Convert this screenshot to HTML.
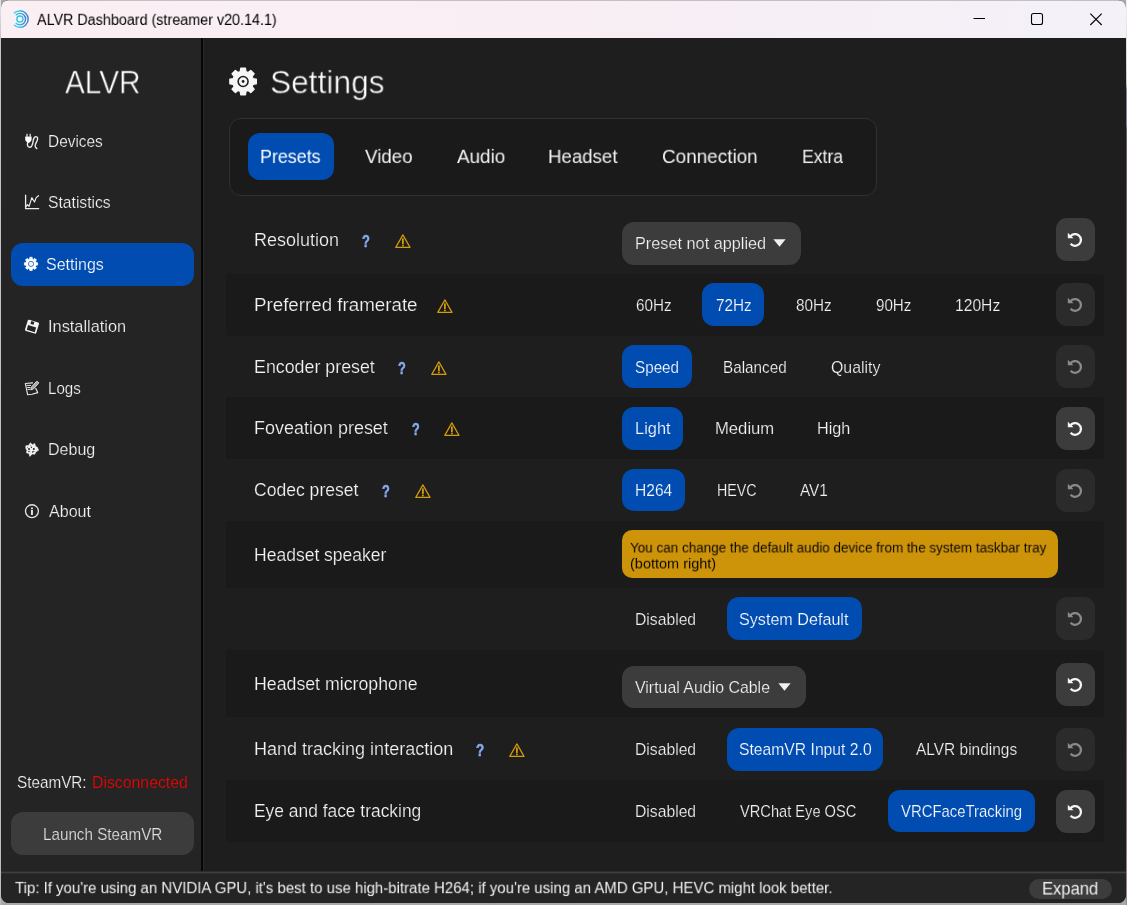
<!DOCTYPE html>
<html><head><meta charset="utf-8"><title>ALVR Dashboard</title>
<style>
html,body{margin:0;padding:0;}
body{width:1127px;height:905px;overflow:hidden;position:relative;background:#a9a7a9;font-family:"Liberation Sans",sans-serif;}
.a{position:absolute;}
.t{position:absolute;white-space:pre;font-family:"Liberation Sans",sans-serif;transform-origin:0 0;}
#txt{left:0;top:0;width:1127px;height:905px;will-change:transform;}
#win{left:1px;top:0;width:1125px;height:903px;border-radius:8px;background:#1e1e1e;overflow:hidden;}
#title{left:0;top:0;width:1125px;height:38px;background:linear-gradient(90deg,#faeff3 0%,#f8eef4 50%,#f6eff6 75%,#f4f1f8 100%);border-top:1px solid #c2c0c2;box-sizing:border-box;}
#side{left:0;top:38px;width:200px;height:834px;background:#242424;}
#sep{left:200px;top:38px;width:2px;height:834px;background:#060606;}
#sep2{left:202px;top:38px;width:1px;height:834px;background:#272727;}
#bot{left:0;top:871px;width:1125px;height:32px;background:#242424;}
#botline{left:0;top:871px;width:1125px;height:3px;background:linear-gradient(180deg,#2c2c2c 0,#2c2c2c 1px,#404040 1px,#404040 2px,#2d2d2d 2px,#2d2d2d 3px);}
#ol{left:0;top:0;width:1px;height:905px;background:linear-gradient(180deg,#e4e4e4 0,#c4c4c4 40px,#bcbcbc 100%);}
#or{left:1126px;top:0;width:1px;height:905px;background:linear-gradient(180deg,#f0eeee 0,#dcd8d2 60px,#c8c4bc 84px,#7e86a2 90px,#7e86a2 124px,#6c5c62 130px,#7a666a 700px,#9c8488 100%);}
.sel{background:#004cb0;}
.btn{background:#3c3c3c;}
.dis{background:#2b2b2b;}
.stripe{left:225px;width:878px;background:#1a1a1a;border-radius:3px;}
.rb{left:1055px;width:39px;height:43px;border-radius:11px;}
.ob{border-radius:12px;}

</style></head>
<body>
<div id="ol" class="a"></div><div id="or" class="a"></div>
<div id="win" class="a">
<div id="title" class="a"></div>
<div id="side" class="a"></div>
<div id="sep" class="a"></div>
<div id="sep2" class="a"></div>
<div id="bot" class="a"></div>
<div id="botline" class="a"></div>
<!-- sidebar selected + launch -->
<div class="a sel" style="left:10px;top:243px;width:183px;height:43px;border-radius:12px;"></div>
<div class="a btn" style="left:10px;top:812px;width:183px;height:43px;border-radius:12px;"></div>
<div class="a btn" style="left:1028px;top:879px;width:83px;height:20px;border-radius:10px;"></div>
<!-- tabs -->
<div class="a" style="left:228px;top:118px;width:648px;height:78px;box-sizing:border-box;border:1px solid #303030;border-radius:12px;background:#1a1a1a;"></div>
<div class="a sel" style="left:247px;top:133px;width:86px;height:47px;border-radius:12px;"></div>
<!-- stripes -->
<div class="a stripe" style="top:274px;height:62px;"></div>
<div class="a stripe" style="top:397px;height:61.5px;"></div>
<div class="a stripe" style="top:520.5px;height:67.3px;"></div>
<div class="a stripe" style="top:650px;height:67px;"></div>
<div class="a stripe" style="top:780px;height:61.5px;"></div>
<!-- row1 dropdown -->
<div class="a btn ob" style="left:621px;top:222px;width:179px;height:43px;"></div>
<!-- selected option buttons -->
<div class="a sel ob" style="left:701.3px;top:283px;width:61.4px;height:42.5px;"></div>
<div class="a sel ob" style="left:621px;top:345px;width:70px;height:42.7px;"></div>
<div class="a sel ob" style="left:621px;top:407px;width:61.2px;height:43px;"></div>
<div class="a sel ob" style="left:621.2px;top:469.3px;width:62.5px;height:42px;"></div>
<div class="a" style="left:621.4px;top:530.3px;width:435.4px;height:48px;border-radius:10px;background:#cd9309;"></div>
<div class="a sel ob" style="left:726.1px;top:597px;width:134.7px;height:42.5px;"></div>
<div class="a btn ob" style="left:621.2px;top:666.3px;width:183.7px;height:42.1px;"></div>
<div class="a sel ob" style="left:726.1px;top:728.4px;width:156.4px;height:42.4px;"></div>
<div class="a sel ob" style="left:887px;top:789.6px;width:146.9px;height:42px;"></div>
<!-- reset buttons -->
<div class="a rb btn" style="top:218px;"></div>
<div class="a rb dis" style="top:283px;"></div>
<div class="a rb dis" style="top:345px;"></div>
<div class="a rb btn" style="top:407px;"></div>
<div class="a rb dis" style="top:469px;"></div>
<div class="a rb dis" style="top:597px;"></div>
<div class="a rb btn" style="top:663px;"></div>
<div class="a rb dis" style="top:728px;"></div>
<div class="a rb btn" style="top:789.5px;"></div>
</div>
<svg class="a" style="left:8px;top:5px;" width="28" height="28" viewBox="0 0 28 28"><defs><linearGradient id="lg" x1="0" y1="0" x2="1" y2="0" gradientUnits="objectBoundingBox"><stop offset="0" stop-color="#2bd3e8"/><stop offset="0.6" stop-color="#2aa6e0"/><stop offset="1" stop-color="#3a78d0"/></linearGradient></defs><circle cx="11.9" cy="14.1" r="3.1" fill="none" stroke="#2cc6e6" stroke-width="1.3"/><path d="M7.73 10.21 A5.7 5.7 0 1 1 7.73 17.99" fill="none" stroke="url(#lg)" stroke-width="1.35"/><path d="M5.93 8.33 A8.3 8.3 0 1 1 5.93 19.87" fill="none" stroke="url(#lg)" stroke-width="1.35"/></svg>
<svg class="a" style="left:0;top:0" width="1127" height="38" viewBox="0 0 1127 38"><path d="M973.5 18.5 H985" stroke="#000" stroke-width="1"/><rect x="1031.5" y="13.5" width="11" height="11" rx="2" fill="none" stroke="#000" stroke-width="1.1"/><path d="M1090.3 13.7 L1101.7 25 M1101.7 13.7 L1090.3 25" stroke="#000" stroke-width="1.1"/></svg>
<svg class="a" style="left:20px;top:128px;" width="24" height="24" viewBox="0 0 24 24"><path d="M8 14 C7 16 7 19.3 9.8 19.3 C12.5 19.3 12.8 15 13.3 12 C13.8 9.5 14.8 8.6 16 8.6 C17.6 8.6 18 10.5 17.2 12.5 C16.3 14.5 15 16 15.2 18 C15.3 19.3 16.2 20 16.8 20.6" fill="none" stroke="#ececec" stroke-width="1.4" stroke-linecap="round"/><path d="M5.2 8.6 H11.6 V11 C11.6 13 10 14.6 8.4 15 C6.8 14.6 5.2 13 5.2 11 Z" fill="#fff"/><rect x="6.3" y="5.8" width="1.4" height="3" fill="#d0d0d0"/><rect x="9.5" y="5.8" width="1.4" height="3" fill="#d0d0d0"/></svg>
<svg class="a" style="left:20px;top:190px;" width="24" height="24" viewBox="0 0 24 24"><path d="M5.6 5.2 V18.6 H18.7" fill="none" stroke="#ececec" stroke-width="1.3" stroke-linecap="round" stroke-linejoin="round"/><path d="M5.9 16.6 L7.5 14.6 L9.1 16.4 L11.8 7.6 L14.5 12 L16.2 7.6 L18.5 5.7" fill="none" stroke="#ececec" stroke-width="1.15" stroke-linejoin="round" stroke-linecap="round"/></svg>
<svg class="a" style="left:20px;top:314px;" width="24" height="24" viewBox="0 0 24 24"><g transform="rotate(17 12 12.7)"><rect x="6.1" y="6.9" width="11.8" height="11.6" rx="1.3" fill="#f4f4f4"/><rect x="7.8" y="12.2" width="8.4" height="4.9" fill="#242424"/><rect x="9.7" y="7.5" width="3.2" height="3.0" fill="#242424"/></g></svg>
<svg class="a" style="left:20px;top:376px;" width="24" height="24" viewBox="0 0 24 24"><path d="M12.6 6.9 L5.3 7.5 L6.5 13 L7.6 18.7 L12 18.3 L17.7 16.6 L15.8 12.4" fill="none" stroke="#e8e8e8" stroke-width="1.15" stroke-linejoin="round" stroke-linecap="round"/><path d="M6.9 9.4 H10.6 M7.6 11.5 H10 M8 13.4 H10" stroke="#e8e8e8" stroke-width="1.0" stroke-linecap="round"/><g transform="rotate(-48 14.8 9.4)"><rect x="10.2" y="8.0" width="9.4" height="2.8" rx="1.1" fill="#a8a8a8" stroke="#e8e8e8" stroke-width="0.8"/><path d="M10.2 8.0 L8.4 9.4 L10.2 10.8Z" fill="#e8e8e8"/></g></svg>
<svg class="a" style="left:20px;top:437px;" width="24" height="24" viewBox="0 0 24 24"><path d="M10.45,5.90 L12.43,7.67 L14.70,6.57 L15.54,9.32 L17.50,10.48 L18.53,13.37 L15.67,14.94 L14.93,17.15 L12.24,16.96 L9.86,19.39 L8.85,16.33 L6.52,15.96 L6.90,13.40 L5.73,11.15 L5.90,8.70 L8.92,8.42 L9.55,6.76Z" fill="#f0f0f0" stroke="#f0f0f0" stroke-width="0.6" stroke-linejoin="round"/><circle cx="9.0" cy="12.1" r="1.0" fill="#242424"/><circle cx="13.8" cy="12.0" r="1.0" fill="#242424"/><circle cx="9.0" cy="14.5" r="0.75" fill="#242424"/><circle cx="11.4" cy="10.3" r="0.7" fill="#242424"/><circle cx="12.6" cy="15.0" r="0.65" fill="#242424"/><circle cx="13.8" cy="14.3" r="0.6" fill="#242424"/><circle cx="7.6" cy="10.2" r="0.45" fill="#242424"/><circle cx="10.4" cy="8.4" r="0.4" fill="#242424"/></svg>
<svg class="a" style="left:20px;top:499px;" width="24" height="24" viewBox="0 0 24 24"><circle cx="11.95" cy="12.2" r="6.45" fill="none" stroke="#e4e4e4" stroke-width="1.3"/><rect x="10.95" y="8.4" width="2.0" height="1.7" rx="0.4" fill="#e4e4e4"/><rect x="10.95" y="10.8" width="2.0" height="5.1" rx="0.3" fill="#e4e4e4"/></svg>
<svg class="a" style="left:22px;top:254px;" width="19" height="19" viewBox="0 0 19 19"><path d="M7.62,4.90 L7.83,3.26 L10.17,3.26 L10.38,4.90 L11.55,5.39 L12.87,4.37 L14.53,6.03 L13.51,7.35 L14.00,8.52 L15.64,8.73 L15.64,11.07 L14.00,11.28 L13.51,12.45 L14.53,13.77 L12.87,15.43 L11.55,14.41 L10.38,14.90 L10.17,16.54 L7.83,16.54 L7.62,14.90 L6.45,14.41 L5.13,15.43 L3.47,13.77 L4.49,12.45 L4.00,11.28 L2.36,11.07 L2.36,8.73 L4.00,8.52 L4.49,7.35 L3.47,6.03 L5.13,4.37 L6.45,5.39Z" fill="#fff" stroke="#fff" stroke-width="0.71" stroke-linejoin="round"/><circle cx="9.00" cy="9.90" r="2.6" fill="none" stroke="#004cb0" stroke-width="0.75"/><circle cx="9.00" cy="9.90" r="0.45" fill="#004cb0"/></svg>
<svg class="a" style="left:227px;top:65px;" width="33" height="33" viewBox="0 0 33 33"><path d="M13.35,6.58 L13.77,3.31 L18.43,3.31 L18.85,6.58 L21.17,7.54 L23.78,5.52 L27.08,8.82 L25.06,11.43 L26.02,13.75 L29.29,14.17 L29.29,18.83 L26.02,19.25 L25.06,21.57 L27.08,24.18 L23.78,27.48 L21.17,25.46 L18.85,26.42 L18.43,29.69 L13.77,29.69 L13.35,26.42 L11.03,25.46 L8.42,27.48 L5.12,24.18 L7.14,21.57 L6.18,19.25 L2.91,18.83 L2.91,14.17 L6.18,13.75 L7.14,11.43 L5.12,8.82 L8.42,5.52 L11.03,7.54Z" fill="#f6f6f6" stroke="#f6f6f6" stroke-width="1.41" stroke-linejoin="round"/><circle cx="16.10" cy="16.50" r="4.95" fill="none" stroke="#1e1e1e" stroke-width="1.55"/><circle cx="16.10" cy="16.50" r="1.4" fill="#1e1e1e"/></svg>
<svg class="a" style="left:388.0px;top:226px;" width="30" height="30" viewBox="0 0 30 30"><path d="M14.9 8.9 L22.0 21.4 H7.8 Z" fill="none" stroke="#d49c0a" stroke-width="1.2" stroke-linejoin="round"/><rect x="14.0" y="12.2" width="1.8" height="6.2" rx="0.6" fill="#d49c0a"/><circle cx="14.9" cy="19.6" r="0.95" fill="#d49c0a"/></svg>
<svg class="a" style="left:429.95px;top:291px;" width="30" height="30" viewBox="0 0 30 30"><path d="M14.9 8.9 L22.0 21.4 H7.8 Z" fill="none" stroke="#d49c0a" stroke-width="1.2" stroke-linejoin="round"/><rect x="14.0" y="12.2" width="1.8" height="6.2" rx="0.6" fill="#d49c0a"/><circle cx="14.9" cy="19.6" r="0.95" fill="#d49c0a"/></svg>
<svg class="a" style="left:423.65px;top:353px;" width="30" height="30" viewBox="0 0 30 30"><path d="M14.9 8.9 L22.0 21.4 H7.8 Z" fill="none" stroke="#d49c0a" stroke-width="1.2" stroke-linejoin="round"/><rect x="14.0" y="12.2" width="1.8" height="6.2" rx="0.6" fill="#d49c0a"/><circle cx="14.9" cy="19.6" r="0.95" fill="#d49c0a"/></svg>
<svg class="a" style="left:436.65px;top:414px;" width="30" height="30" viewBox="0 0 30 30"><path d="M14.9 8.9 L22.0 21.4 H7.8 Z" fill="none" stroke="#d49c0a" stroke-width="1.2" stroke-linejoin="round"/><rect x="14.0" y="12.2" width="1.8" height="6.2" rx="0.6" fill="#d49c0a"/><circle cx="14.9" cy="19.6" r="0.95" fill="#d49c0a"/></svg>
<svg class="a" style="left:407.65px;top:476px;" width="30" height="30" viewBox="0 0 30 30"><path d="M14.9 8.9 L22.0 21.4 H7.8 Z" fill="none" stroke="#d49c0a" stroke-width="1.2" stroke-linejoin="round"/><rect x="14.0" y="12.2" width="1.8" height="6.2" rx="0.6" fill="#d49c0a"/><circle cx="14.9" cy="19.6" r="0.95" fill="#d49c0a"/></svg>
<svg class="a" style="left:501.65px;top:735px;" width="30" height="30" viewBox="0 0 30 30"><path d="M14.9 8.9 L22.0 21.4 H7.8 Z" fill="none" stroke="#d49c0a" stroke-width="1.2" stroke-linejoin="round"/><rect x="14.0" y="12.2" width="1.8" height="6.2" rx="0.6" fill="#d49c0a"/><circle cx="14.9" cy="19.6" r="0.95" fill="#d49c0a"/></svg>
<svg class="a" style="left:1056px;top:218px;" width="39" height="43" viewBox="0 0 39 43"><path d="M14.14 18.90 A5.85 5.85 0 1 1 14.62 25.76" fill="none" stroke="#f4f4f4" stroke-width="2.3"/><path d="M11.8 14.8 V20.3 H17.5 Z" fill="#f4f4f4"/></svg>
<svg class="a" style="left:1056px;top:283px;" width="39" height="43" viewBox="0 0 39 43"><path d="M14.14 18.90 A5.85 5.85 0 1 1 14.62 25.76" fill="none" stroke="#8a8a8a" stroke-width="2.3"/><path d="M11.8 14.8 V20.3 H17.5 Z" fill="#8a8a8a"/></svg>
<svg class="a" style="left:1056px;top:345px;" width="39" height="43" viewBox="0 0 39 43"><path d="M14.14 18.90 A5.85 5.85 0 1 1 14.62 25.76" fill="none" stroke="#8a8a8a" stroke-width="2.3"/><path d="M11.8 14.8 V20.3 H17.5 Z" fill="#8a8a8a"/></svg>
<svg class="a" style="left:1056px;top:407px;" width="39" height="43" viewBox="0 0 39 43"><path d="M14.14 18.90 A5.85 5.85 0 1 1 14.62 25.76" fill="none" stroke="#f4f4f4" stroke-width="2.3"/><path d="M11.8 14.8 V20.3 H17.5 Z" fill="#f4f4f4"/></svg>
<svg class="a" style="left:1056px;top:469px;" width="39" height="43" viewBox="0 0 39 43"><path d="M14.14 18.90 A5.85 5.85 0 1 1 14.62 25.76" fill="none" stroke="#8a8a8a" stroke-width="2.3"/><path d="M11.8 14.8 V20.3 H17.5 Z" fill="#8a8a8a"/></svg>
<svg class="a" style="left:1056px;top:597px;" width="39" height="43" viewBox="0 0 39 43"><path d="M14.14 18.90 A5.85 5.85 0 1 1 14.62 25.76" fill="none" stroke="#8a8a8a" stroke-width="2.3"/><path d="M11.8 14.8 V20.3 H17.5 Z" fill="#8a8a8a"/></svg>
<svg class="a" style="left:1056px;top:663px;" width="39" height="43" viewBox="0 0 39 43"><path d="M14.14 18.90 A5.85 5.85 0 1 1 14.62 25.76" fill="none" stroke="#f4f4f4" stroke-width="2.3"/><path d="M11.8 14.8 V20.3 H17.5 Z" fill="#f4f4f4"/></svg>
<svg class="a" style="left:1056px;top:728px;" width="39" height="43" viewBox="0 0 39 43"><path d="M14.14 18.90 A5.85 5.85 0 1 1 14.62 25.76" fill="none" stroke="#8a8a8a" stroke-width="2.3"/><path d="M11.8 14.8 V20.3 H17.5 Z" fill="#8a8a8a"/></svg>
<svg class="a" style="left:1056px;top:789.5px;" width="39" height="43" viewBox="0 0 39 43"><path d="M14.14 18.90 A5.85 5.85 0 1 1 14.62 25.76" fill="none" stroke="#f4f4f4" stroke-width="2.3"/><path d="M11.8 14.8 V20.3 H17.5 Z" fill="#f4f4f4"/></svg>
<svg class="a" style="left:773.3px;top:238.6px;" width="14" height="9" viewBox="0 0 14 9"><path d="M0.4 0.3 H12.6 L6.5 7.8 Z" fill="#f0f0f0"/></svg>
<svg class="a" style="left:778px;top:683px;" width="14" height="9" viewBox="0 0 14 9"><path d="M0.4 0.3 H12.6 L6.5 7.8 Z" fill="#f0f0f0"/></svg>
<div id="txt" class="a">
<span class="t" style="will-change:transform;left:37.10px;top:10.04px;font-size:16px;line-height:21px;color:#000;transform:scale(0.8964,0.935);">ALVR Dashboard (streamer v20.14.1)</span>
<span class="t" style="will-change:transform;-webkit-text-stroke:0.5px #242424;left:65.09px;top:60.66px;font-size:33px;line-height:43px;color:#ffffff;transform:scale(0.9012,0.98);">ALVR</span>
<span class="t" style="-webkit-text-stroke:0.22px #242424;left:47.90px;top:131.00px;font-size:17px;line-height:22px;color:#f2f2f2;transform:scale(0.9068,1.0);">Devices</span>
<span class="t" style="-webkit-text-stroke:0.22px #242424;left:47.51px;top:192.00px;font-size:17px;line-height:22px;color:#f2f2f2;transform:scale(0.9220,1.0);">Statistics</span>
<span class="t" style="-webkit-text-stroke:0.22px #004cb0;left:46.11px;top:254.00px;font-size:17px;line-height:22px;color:#fff;transform:scale(0.9412,1.0);">Settings</span>
<span class="t" style="-webkit-text-stroke:0.22px #242424;left:47.60px;top:316.00px;font-size:17px;line-height:22px;color:#f2f2f2;transform:scale(0.9617,1.0);">Installation</span>
<span class="t" style="-webkit-text-stroke:0.22px #242424;left:47.74px;top:378.00px;font-size:17px;line-height:22px;color:#f2f2f2;transform:scale(0.8901,1.0);">Logs</span>
<span class="t" style="-webkit-text-stroke:0.22px #242424;left:47.77px;top:439.00px;font-size:17px;line-height:22px;color:#f2f2f2;transform:scale(0.9440,1.0);">Debug</span>
<span class="t" style="-webkit-text-stroke:0.22px #242424;left:49.00px;top:501.00px;font-size:17px;line-height:22px;color:#f2f2f2;transform:scale(0.9461,1.0);">About</span>
<span class="t" style="-webkit-text-stroke:0.22px #242424;left:16.72px;top:772.00px;font-size:17px;line-height:22px;color:#f2f2f2;transform:scale(0.8981,1.0);">SteamVR:</span>
<span class="t" style="-webkit-text-stroke:0.22px #242424;left:91.99px;top:772.00px;font-size:17px;line-height:22px;color:#f80000;transform:scale(0.9302,1.0);">Disconnected</span>
<span class="t" style="-webkit-text-stroke:0.22px #3c3c3c;left:43.01px;top:824.00px;font-size:17px;line-height:22px;color:#e0e0e0;transform:scale(0.8955,1.0);">Launch SteamVR</span>
<span class="t" style="will-change:transform;left:14.97px;top:877.80px;font-size:16px;line-height:21px;color:#f2f2f2;transform:scale(0.9364,0.95);">Tip: If you&#x27;re using an NVIDIA GPU, it&#x27;s best to use high-bitrate H264; if you&#x27;re using an AMD GPU, HEVC might look better.</span>
<span class="t" style="will-change:transform;left:1041.50px;top:877.45px;font-size:18.5px;line-height:24px;color:#f2f2f2;transform:scale(0.8942,0.975);">Expand</span>
<span class="t" style="will-change:transform;-webkit-text-stroke:0.5px #1e1e1e;left:270.02px;top:60.66px;font-size:33px;line-height:43px;color:#ffffff;transform:scale(0.9602,0.98);">Settings</span>
<span class="t" style="will-change:transform;left:260.21px;top:144.95px;font-size:19.5px;line-height:25px;color:#fff;transform:scale(0.9167,0.95);">Presets</span>
<span class="t" style="will-change:transform;left:364.98px;top:144.95px;font-size:19.5px;line-height:25px;color:#f2f2f2;transform:scale(0.9601,0.95);">Video</span>
<span class="t" style="will-change:transform;left:457.10px;top:144.95px;font-size:19.5px;line-height:25px;color:#f2f2f2;transform:scale(0.9664,0.95);">Audio</span>
<span class="t" style="will-change:transform;left:548.39px;top:144.95px;font-size:19.5px;line-height:25px;color:#f2f2f2;transform:scale(0.9570,0.95);">Headset</span>
<span class="t" style="will-change:transform;left:661.88px;top:144.95px;font-size:19.5px;line-height:25px;color:#f2f2f2;transform:scale(0.9697,0.95);">Connection</span>
<span class="t" style="will-change:transform;left:801.54px;top:144.95px;font-size:19.5px;line-height:25px;color:#f2f2f2;transform:scale(0.9000,0.95);">Extra</span>
<span class="t" style="-webkit-text-stroke:0.22px #1e1e1e;left:253.51px;top:228.00px;font-size:18.75px;line-height:24px;color:#f2f2f2;transform:scale(0.9588,1.0);">Resolution</span>
<span class="t" style="-webkit-text-stroke:0.22px #1e1e1e;left:254.14px;top:293.00px;font-size:18.75px;line-height:24px;color:#f2f2f2;transform:scale(0.9994,1.0);">Preferred framerate</span>
<span class="t" style="-webkit-text-stroke:0.22px #1e1e1e;left:253.70px;top:355.00px;font-size:18.75px;line-height:24px;color:#f2f2f2;transform:scale(0.9500,1.0);">Encoder preset</span>
<span class="t" style="-webkit-text-stroke:0.22px #1e1e1e;left:253.50px;top:416.00px;font-size:18.75px;line-height:24px;color:#f2f2f2;transform:scale(0.9584,1.0);">Foveation preset</span>
<span class="t" style="-webkit-text-stroke:0.22px #1e1e1e;left:253.85px;top:478.00px;font-size:18.75px;line-height:24px;color:#f2f2f2;transform:scale(0.9362,1.0);">Codec preset</span>
<span class="t" style="-webkit-text-stroke:0.22px #1e1e1e;left:253.60px;top:543.00px;font-size:18.75px;line-height:24px;color:#f2f2f2;transform:scale(0.9343,1.0);">Headset speaker</span>
<span class="t" style="-webkit-text-stroke:0.22px #1e1e1e;left:253.52px;top:672.00px;font-size:18.75px;line-height:24px;color:#f2f2f2;transform:scale(0.9457,1.0);">Headset microphone</span>
<span class="t" style="-webkit-text-stroke:0.22px #1e1e1e;left:253.56px;top:737.00px;font-size:18.75px;line-height:24px;color:#f2f2f2;transform:scale(0.9605,1.0);">Hand tracking interaction</span>
<span class="t" style="-webkit-text-stroke:0.22px #1e1e1e;left:253.56px;top:799.00px;font-size:18.75px;line-height:24px;color:#f2f2f2;transform:scale(0.9277,1.0);">Eye and face tracking</span>
<span class="t" style="left:362.05px;top:231.00px;font-size:17px;line-height:22px;color:#86abf1;transform:scale(0.7596,1.0);font-weight:bold;-webkit-text-stroke:0.5px #86abf1;">?</span>
<span class="t" style="left:398.12px;top:358.00px;font-size:17px;line-height:22px;color:#86abf1;transform:scale(0.7528,1.0);font-weight:bold;-webkit-text-stroke:0.5px #86abf1;">?</span>
<span class="t" style="left:411.71px;top:419.00px;font-size:17px;line-height:22px;color:#86abf1;transform:scale(0.7431,1.0);font-weight:bold;-webkit-text-stroke:0.5px #86abf1;">?</span>
<span class="t" style="left:381.51px;top:481.00px;font-size:17px;line-height:22px;color:#86abf1;transform:scale(0.7520,1.0);font-weight:bold;-webkit-text-stroke:0.5px #86abf1;">?</span>
<span class="t" style="left:476.00px;top:740.00px;font-size:17px;line-height:22px;color:#86abf1;transform:scale(0.7892,1.0);font-weight:bold;-webkit-text-stroke:0.5px #86abf1;">?</span>
<span class="t" style="-webkit-text-stroke:0.22px #3c3c3c;left:634.55px;top:233.00px;font-size:17px;line-height:22px;color:#f2f2f2;transform:scale(0.9569,1.0);">Preset not applied</span>
<span class="t" style="-webkit-text-stroke:0.22px #1e1e1e;left:635.83px;top:295.00px;font-size:17px;line-height:22px;color:#f2f2f2;transform:scale(0.8962,1.0);">60Hz</span>
<span class="t" style="-webkit-text-stroke:0.22px #004cb0;left:715.84px;top:295.00px;font-size:17px;line-height:22px;color:#fff;transform:scale(0.9005,1.0);">72Hz</span>
<span class="t" style="-webkit-text-stroke:0.22px #1e1e1e;left:795.50px;top:295.00px;font-size:17px;line-height:22px;color:#f2f2f2;transform:scale(0.8995,1.0);">80Hz</span>
<span class="t" style="-webkit-text-stroke:0.22px #1e1e1e;left:875.70px;top:295.00px;font-size:17px;line-height:22px;color:#f2f2f2;transform:scale(0.8920,1.0);">90Hz</span>
<span class="t" style="-webkit-text-stroke:0.22px #1e1e1e;left:955.15px;top:295.00px;font-size:17px;line-height:22px;color:#f2f2f2;transform:scale(0.9199,1.0);">120Hz</span>
<span class="t" style="-webkit-text-stroke:0.22px #004cb0;left:634.56px;top:357.00px;font-size:17px;line-height:22px;color:#fff;transform:scale(0.8962,1.0);">Speed</span>
<span class="t" style="-webkit-text-stroke:0.22px #1e1e1e;left:722.89px;top:357.00px;font-size:17px;line-height:22px;color:#f2f2f2;transform:scale(0.8976,1.0);">Balanced</span>
<span class="t" style="-webkit-text-stroke:0.22px #1e1e1e;left:831.21px;top:357.00px;font-size:17px;line-height:22px;color:#f2f2f2;transform:scale(0.9348,1.0);">Quality</span>
<span class="t" style="-webkit-text-stroke:0.22px #004cb0;left:634.63px;top:418.00px;font-size:17px;line-height:22px;color:#fff;transform:scale(0.9661,1.0);">Light</span>
<span class="t" style="-webkit-text-stroke:0.22px #1e1e1e;left:714.62px;top:418.00px;font-size:17px;line-height:22px;color:#f2f2f2;transform:scale(0.9792,1.0);">Medium</span>
<span class="t" style="-webkit-text-stroke:0.22px #1e1e1e;left:816.57px;top:418.00px;font-size:17px;line-height:22px;color:#f2f2f2;transform:scale(0.9526,1.0);">High</span>
<span class="t" style="-webkit-text-stroke:0.22px #004cb0;left:634.77px;top:480.00px;font-size:17px;line-height:22px;color:#fff;transform:scale(0.9177,1.0);">H264</span>
<span class="t" style="-webkit-text-stroke:0.22px #1e1e1e;left:716.77px;top:480.00px;font-size:17px;line-height:22px;color:#f2f2f2;transform:scale(0.8389,1.0);">HEVC</span>
<span class="t" style="-webkit-text-stroke:0.22px #1e1e1e;left:800.09px;top:480.00px;font-size:17px;line-height:22px;color:#f2f2f2;transform:scale(0.9029,1.0);">AV1</span>
<span class="t" style="will-change:transform;left:630.40px;top:538.56px;font-size:14px;line-height:18px;color:#0e0a00;transform:scale(0.9632,0.96);">You can change the default audio device from the system taskbar tray</span>
<span class="t" style="will-change:transform;left:629.73px;top:554.56px;font-size:14px;line-height:18px;color:#0e0a00;transform:scale(1.0347,0.96);">(bottom right)</span>
<span class="t" style="-webkit-text-stroke:0.22px #1e1e1e;left:634.54px;top:609.00px;font-size:17px;line-height:22px;color:#f2f2f2;transform:scale(0.9237,1.0);">Disabled</span>
<span class="t" style="-webkit-text-stroke:0.22px #004cb0;left:739.33px;top:609.00px;font-size:17px;line-height:22px;color:#fff;transform:scale(0.9493,1.0);">System Default</span>
<span class="t" style="-webkit-text-stroke:0.22px #3c3c3c;left:635.46px;top:677.00px;font-size:17px;line-height:22px;color:#f2f2f2;transform:scale(0.9356,1.0);">Virtual Audio Cable</span>
<span class="t" style="-webkit-text-stroke:0.22px #1e1e1e;left:634.69px;top:739.00px;font-size:17px;line-height:22px;color:#f2f2f2;transform:scale(0.9237,1.0);">Disabled</span>
<span class="t" style="-webkit-text-stroke:0.22px #004cb0;left:739.29px;top:739.00px;font-size:17px;line-height:22px;color:#fff;transform:scale(0.9233,1.0);">SteamVR Input 2.0</span>
<span class="t" style="-webkit-text-stroke:0.22px #1e1e1e;left:916.10px;top:739.00px;font-size:17px;line-height:22px;color:#f2f2f2;transform:scale(0.9100,1.0);">ALVR bindings</span>
<span class="t" style="-webkit-text-stroke:0.22px #1e1e1e;left:634.58px;top:801.00px;font-size:17px;line-height:22px;color:#f2f2f2;transform:scale(0.9235,1.0);">Disabled</span>
<span class="t" style="-webkit-text-stroke:0.22px #1e1e1e;left:739.80px;top:801.00px;font-size:17px;line-height:22px;color:#f2f2f2;transform:scale(0.8608,1.0);">VRChat Eye OSC</span>
<span class="t" style="-webkit-text-stroke:0.22px #004cb0;left:901.06px;top:801.00px;font-size:17px;line-height:22px;color:#fff;transform:scale(0.8757,1.0);">VRCFaceTracking</span>
</div>
</body></html>
